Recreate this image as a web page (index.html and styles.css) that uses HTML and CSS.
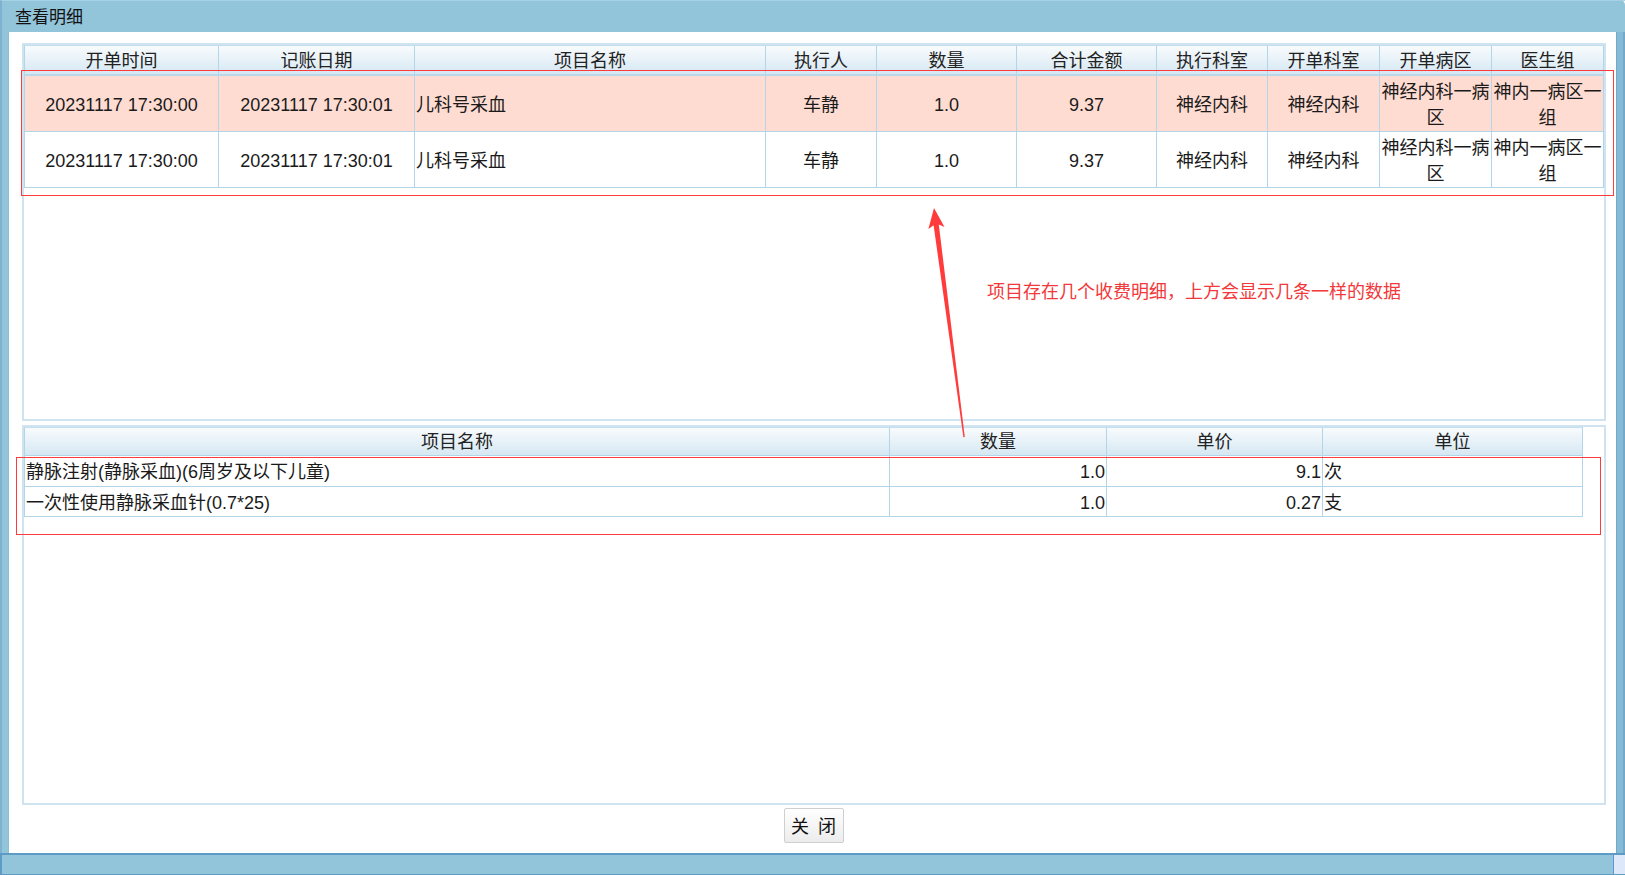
FILE: index.html
```html
<!DOCTYPE html>
<html lang="zh-CN">
<head>
<meta charset="utf-8">
<title>查看明细</title>
<link rel="stylesheet" href="styles.css">
</head>
<body>
<div class="window">
  <div class="titlebar">查看明细</div>
  <div class="frame">
    <div class="content">
      <div class="panel panel-upper">
        <table class="grid grid-main">
          <thead>
            <tr>
              <th class="m1">开单时间</th>
              <th class="m2">记账日期</th>
              <th class="m3">项目名称</th>
              <th class="m4">执行人</th>
              <th class="m5">数量</th>
              <th class="m6">合计金额</th>
              <th class="m7">执行科室</th>
              <th class="m8">开单科室</th>
              <th class="m9">开单病区</th>
              <th class="m10">医生组</th>
            </tr>
          </thead>
          <tbody>
            <tr class="selected">
              <td>20231117 17:30:00</td>
              <td>20231117 17:30:01</td>
              <td class="left">儿科号采血</td>
              <td>车静</td>
              <td>1.0</td>
              <td>9.37</td>
              <td>神经内科</td>
              <td>神经内科</td>
              <td>神经内科一病区</td>
              <td>神内一病区一组</td>
            </tr>
            <tr>
              <td>20231117 17:30:00</td>
              <td>20231117 17:30:01</td>
              <td class="left">儿科号采血</td>
              <td>车静</td>
              <td>1.0</td>
              <td>9.37</td>
              <td>神经内科</td>
              <td>神经内科</td>
              <td>神经内科一病区</td>
              <td>神内一病区一组</td>
            </tr>
          </tbody>
        </table>
      </div>
      <div class="panel panel-lower">
        <table class="grid grid-detail">
          <thead>
            <tr>
              <th class="d1">项目名称</th>
              <th class="d2">数量</th>
              <th class="d3">单价</th>
              <th class="d4">单位</th>
            </tr>
          </thead>
          <tbody>
            <tr>
              <td class="left">静脉注射(静脉采血)(6周岁及以下儿童)</td>
              <td class="right">1.0</td>
              <td class="right">9.1</td>
              <td class="left">次</td>
            </tr>
            <tr>
              <td class="left">一次性使用静脉采血针(0.7*25)</td>
              <td class="right">1.0</td>
              <td class="right">0.27</td>
              <td class="left">支</td>
            </tr>
          </tbody>
        </table>
      </div>
      <div class="actions">
        <button class="btn" type="button">关 闭</button>
      </div>
    </div>
    <div class="rstrip"></div>
  </div>
  <div class="statusbar"><div class="grip"></div></div>

  <svg class="markup" width="1625" height="875" viewBox="0 0 1625 875" xmlns="http://www.w3.org/2000/svg">
    <rect x="21.5" y="70.5" width="1592" height="125" fill="none" stroke="#ff3a3a" stroke-width="1"/>
    <rect x="16.5" y="457.5" width="1584" height="77" fill="none" stroke="#ff3a3a" stroke-width="1"/>
    <polygon points="934,208 944.5,227 938.8,224.6 964.8,437 963.4,437.2 933.6,225.2 928.4,229" fill="#ff3b3b"/>
  </svg>
  <div class="note">项目存在几个收费明细，上方会显示几条一样的数据</div>
</div>
</body>
</html>
```
FILE: styles.css
```css
* { box-sizing: border-box; }
html, body { margin: 0; padding: 0; }
body {
  width: 1625px;
  height: 875px;
  overflow: hidden;
  background: #ffffff;
  font-family: "Liberation Sans", "Noto Sans CJK SC", Arial, sans-serif;
  color: #1e1e1e;
}

.window {
  position: relative;
  width: 1625px;
  height: 875px;
  display: flex;
  flex-direction: column;
  background: #92c4da;
  border-top-right-radius: 5px;
}

.titlebar {
  height: 32px;
  flex: none;
  padding-left: 13px;
  font-size: 17px;
  line-height: 33px;
  color: #111;
  border-left: 2px solid #7db2d0;
  border-top: 1px solid #a6d2e5;
}

.frame {
  flex: 1;
  display: flex;
  border-left: 2px solid #7db2d0;
  padding-left: 6px;
}

.content {
  width: 1608px;
  flex: none;
  background: #ffffff;
  display: flex;
  flex-direction: column;
  padding: 11px 11px 10px 13px;
  border-left: 1px solid #8ebdd6;
}

.rstrip {
  flex: 1;
  background: #86bbd7;
  border-left: 1px solid #74a9c9;
  border-right: 2px solid #73a8c9;
}

.statusbar {
  height: 22px;
  flex: none;
  display: flex;
  border-top: 2px solid #5b9bc6;
  border-left: 2px solid #5f9cc4;
  border-bottom: 1px solid #5f9cc4;
}

.grip {
  margin-left: auto;
  width: 12px;
  background: #dde9fb;
  border-left: 1px solid #6394d2;
}

.panel {
  width: 1584px;
  border: 2px solid #cfe4f0;
  background: #ffffff;
  flex: none;
}
.panel-upper { height: 378px; }
.panel-lower { height: 380px; margin-top: 4px; }

.grid {
  border-collapse: separate;
  border-spacing: 0;
  table-layout: fixed;
  font-size: 18px;
  line-height: 26px;
}
.grid-main { width: 1580px; }
.grid-detail { width: 1559px; }

.grid th {
  font-weight: normal;
  color: #222;
  background: linear-gradient(#f8fbfd, #d6e8f3);
  border-right: 1px solid #b2d5e8;
  border-top: 1px solid #c4e0ee;
  padding: 2px 0 0;
  text-align: center;
  vertical-align: middle;
  overflow: hidden;
  white-space: nowrap;
}
.grid th:first-child, .grid td:first-child { border-left: 1px solid #b2d5e8; }

.grid td {
  border-right: 1px solid #b2d5e8;
  border-bottom: 1px solid #b2d5e8;
  padding: 2px 1px 0;
  text-align: center;
  vertical-align: middle;
  color: #1a1a1a;
  overflow: hidden;
}
.grid td.left { text-align: left; }
.grid td.right { text-align: right; }

.grid-main th { height: 31px; border-bottom: 2px solid #b9d9ea; }
.grid-main td { height: 56px; }
.grid-main tr.selected td { background: #ffdcd2; }

.grid-detail th { height: 29px; padding-top: 1px; border-bottom: 1px solid #b2d5e8; }
.grid-detail td { height: 30px; line-height: 24px; padding-top: 2px; }
.grid-detail tbody tr:first-child td { height: 31px; }

.m1 { width: 195px; }
.m2 { width: 196px; }
.m3 { width: 351px; }
.m4 { width: 111px; }
.m5 { width: 140px; }
.m6 { width: 140px; }
.m7 { width: 111px; }
.m8 { width: 112px; }
.m9 { width: 112px; }
.m10 { width: 112px; }

.d1 { width: 866px; }
.d2 { width: 217px; }
.d3 { width: 216px; }
.d4 { width: 260px; }

.actions {
  display: flex;
  justify-content: center;
  margin-top: 3px;
}

.btn {
  width: 60px;
  height: 35px;
  padding: 0;
  border: 1px solid #cfcfcf;
  border-radius: 2px;
  background: linear-gradient(#ffffff, #ececec);
  font-family: "Noto Sans CJK SC", "Liberation Sans", sans-serif;
  font-size: 18px;
  line-height: 33px;
  word-spacing: 5px;
  color: #111;
}

.markup {
  position: absolute;
  left: 0;
  top: 0;
  pointer-events: none;
}

.note {
  position: absolute;
  left: 987px;
  top: 279px;
  font-size: 18px;
  line-height: 26px;
  color: #f2383a;
  white-space: nowrap;
}
```
